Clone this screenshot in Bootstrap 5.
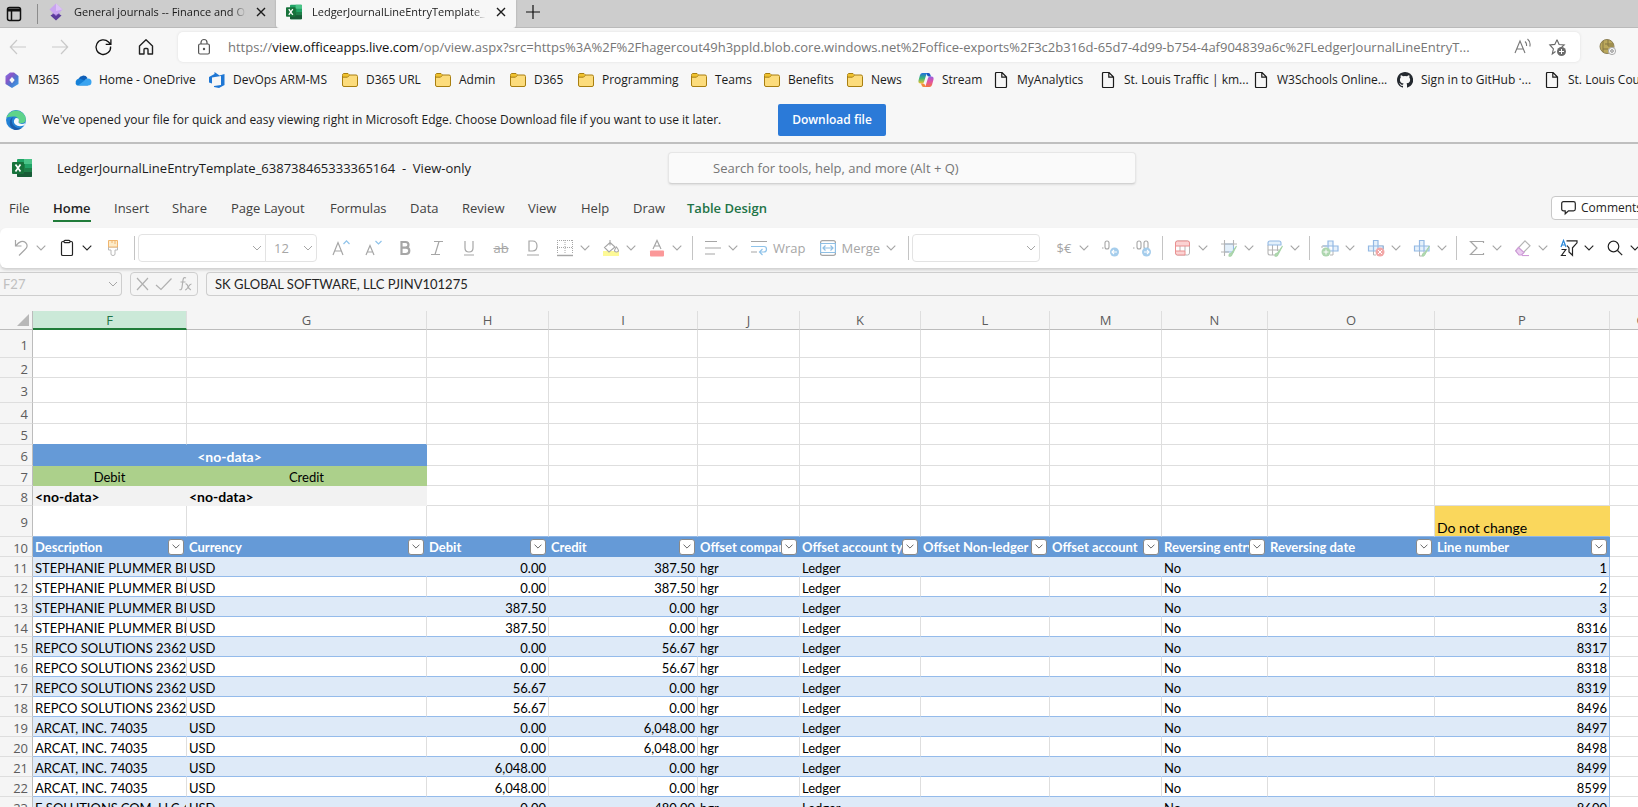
<!DOCTYPE html>
<html lang="en">
<head>
<meta charset="utf-8">
<meta name="viewport" content="width=device-width, initial-scale=1">
<title>LedgerJournalLineEntryTemplate</title>
<link href="https://cdn.jsdelivr.net/npm/bootstrap@5.3.0/dist/css/bootstrap.min.css" rel="stylesheet">
<style>
body{font-family:"Open Sans","Noto Sans",sans-serif;font-size:12px;line-height:16px;color:#1b1b1b;background:#f5f5f5}
svg{display:block;flex:none;overflow:visible}
button{font:inherit;color:inherit}
.plain{border:0;background:none;padding:0;display:flex;align-items:center;justify-content:center}
.i16{width:16px;height:16px}

/* browser chrome */
.tabstrip{height:28px;background:#cdcdcd;box-shadow:inset 0 -1px #bababa}
.tab-actions{width:38px;padding-left:6px;border-right:1px solid #8c8c8c;height:20px;justify-content:flex-start}
.page-tab{height:28px;padding:0 10px;gap:10px;color:#1b1b1b;text-decoration:none;font-size:11px}
.page-tab.first{width:238px}
.page-tab.current{width:240px;background:#f7f7f7;border-radius:0 0 3px 3px;box-shadow:0 0 2px #999;clip-path:inset(0 -2px)}
.tab-label{flex:1;min-width:0;overflow:hidden;white-space:nowrap;-webkit-mask-image:linear-gradient(90deg,#000 92%,transparent);mask-image:linear-gradient(90deg,#000 92%,transparent)}
.chrome{background:#f7f7f7}
.toolbar{height:38px;padding-right:22px;gap:20px}
.toolbar-main{min-width:0}
.nav-keys{width:178px;padding-left:9px;gap:27px}
.address{height:30px;border-radius:5px;box-shadow:0 0 3px #ddd;padding:0 14px 0 20px;min-width:0;gap:18px}
.url{font-size:13px;color:#767676;min-width:0;outline:0}
.url b{font-weight:400;color:#111}
.bookmarks{display:grid;height:28px;padding-left:4px;grid-template-columns:71px 134px 133px 93px 75px 68px 113px 73px 83px 71px 75px 107px 153px 144px 147px 150px}
.bookmarks a{display:flex;align-items:center;gap:8px;color:#1b1b1b;text-decoration:none;white-space:nowrap}
.notice{height:50px;padding:4px 0 0 6px;border-bottom:2px solid #bfbfbf;gap:16px;white-space:nowrap}
.notice-text{min-width:704px}
.btn-download{width:108px;height:32px;background:#2b7ad8;color:#fff;border-radius:2px;font-size:12px;font-weight:600;padding:0;margin-left:16px}
.btn-download:hover{background:#2369bd;color:#fff}

/* workbook header */
.titlebar{display:grid;grid-template-columns:668px 468px 1fr;height:48px;align-items:center;font-size:13px}
.book-name{padding-left:12px;gap:25px}
.search{height:32px;background:#fafafa;border:1px solid #e6e6e6;border-bottom-color:#d2d2d2;border-radius:4px;padding:0 44px;font-size:13px;box-shadow:0 1px 2px #ddd}
.search::placeholder{color:#767676;opacity:1}
.menus{height:36px;font-size:13px;color:#424242;display:grid;grid-template-columns:44px 61px 58px 59px 99px 80px 52px 66px 53px 52px 54px 1fr 87px;padding-left:9px;overflow:hidden}
.menus a{color:inherit;text-decoration:none;white-space:nowrap;justify-self:start;height:30px;padding-top:8px}
.menus .on{font-weight:600;color:#242424;border-bottom:2px solid #217c3a}
.menus .ctx{font-weight:600;color:#217346}
.comments{width:100px;height:24px;background:#fff;border:1px solid #c8c8c8;border-radius:4px;padding-left:9px;gap:5px;display:flex;align-items:center;font-size:12px;margin-top:4px;color:#242424}

/* ribbon */
.ribbon{display:grid;grid-template-columns:134px 558px 216px 254px 147px 147px 182px;height:40px;background:#fff;border-radius:6px 0 0 6px;box-shadow:0 2px 3px #cfcfcf;color:#a6a6a6;overflow:hidden;font-size:13px;position:relative}
.rgroup{display:flex;align-items:center;min-width:0;padding-left:13px;position:relative}
.rgroup.tight{padding-left:4px}
.rgroup+.rgroup::before{content:"";position:absolute;left:0;top:8px;width:1px;height:24px;background:#c4c4c4}
.split{width:46px;gap:7px;justify-content:flex-start;flex:none}
.wide{gap:6px;margin-right:14px}
.one{width:32px;height:28px;flex:none}
.live{color:#242424}
.pick{appearance:none;height:28px;border:1px solid #e3e3e3;border-radius:4px;font-size:13px;color:#a6a6a6;padding:0 8px;background:#fff url("data:image/svg+xml,%3Csvg xmlns='http://www.w3.org/2000/svg' width='10' height='6'%3E%3Cpath d='M1 1l4 4 4-4' fill='none' stroke='%23a6a6a6'/%3E%3C/svg%3E") no-repeat right 3px center;flex:none}
.pick.face{width:128px;border-radius:4px 0 0 4px}
.pick.pt{width:52px;margin:0 8px 0 -1px;border-radius:0 4px 4px 0}
.pick.num{width:128px;margin-right:16px}

/* formula bar */
.fbar{display:grid;grid-template-columns:122px 68px 1fr;gap:8px;padding:4px 0 15px;overflow:hidden}
.fbox{height:24px;border:1px solid #cecece;border-radius:4px;background:#f5f5f5;font-family:Lato,sans-serif;font-size:13px;padding:0 8px;color:#242424;min-width:0}
.fbox.where{border-left:0;border-radius:0 4px 4px 0;color:#c0c0c0;padding-left:3px;background:#f5f5f5 url("data:image/svg+xml,%3Csvg xmlns='http://www.w3.org/2000/svg' width='10' height='6'%3E%3Cpath d='M1 1l4 4 4-4' fill='none' stroke='%23a6a6a6'/%3E%3C/svg%3E") no-repeat right 3px center}
.fbox.keys{padding:0 5px;color:#b0b0b0}
.fbox.whole{border-right:0;border-radius:4px 0 0 4px}

/* sheet: the last column runs past the window's right edge */
.sheet{table-layout:fixed;width:calc(100% + 36px);border-collapse:separate;border-spacing:0;font-family:Lato,sans-serif;font-size:13px;line-height:16px;color:#000;background:#fff}
.sheet th,.sheet td{padding:0 2px;border-right:1px solid #dedede;border-bottom:1px solid #dedede;overflow:hidden;white-space:nowrap;height:20px;vertical-align:bottom;font-weight:400}
.sheet thead th{height:19px;background:#f5f5f5;color:#5c5c5c;text-align:center;vertical-align:middle;border-bottom-color:#bcbcbc;font-family:"Open Sans",sans-serif;padding:0}
.sheet thead .sel{background:#cbe9d8;color:#217346;border-bottom:2px solid #217c3a}
.sheet tbody th{background:#f5f5f5;color:#5c5c5c;text-align:right;vertical-align:middle;padding:2px 4px 0 0;border-right-color:#bcbcbc;font-family:"Open Sans",sans-serif;font-size:13px}
.sheet .corner{border-right-color:#bcbcbc}
.corner svg{margin-left:17px}
.sheet .r1 *{height:28px}.sheet .r3 *{height:25px}.sheet .r4 *,.sheet .r5 *,.sheet .r6 *{height:21px}.sheet .r9 *{height:31px}
.sheet .blue{background:#659ad7;border-color:#659ad7;color:#fff;font-weight:700;text-align:center;font-size:14px}
.sheet .green{background:#acd08b;border-color:#acd08b;text-align:center}
.sheet .grey{background:#f2f2f2;border-color:#f2f2f2;font-weight:700;font-size:14px}
.sheet .gold{background:#fad75c;border-right-color:#fad75c;font-size:14px}
.sheet .r5 .edge{border-bottom-color:#659ad7}
.sheet .r9 td:not(:last-child){border-bottom-color:#8fb6e6}
.sheet .hd{background:#659ad7;border-color:#659ad7;color:#fff;font-weight:700;padding:0 2px}
.hd div{display:flex;align-items:center;height:19px}
.hd span{flex:1;min-width:0;overflow:hidden;padding-top:1px}
.filter{width:16px;height:16px;flex:none;background:#fff;border:1px solid #8a8a8a;border-radius:3px;color:#555}
.sheet .rec{border-bottom-color:#94bbeb}
.sheet .band .rec{background:#deeaf8;border-right-color:#deeaf8}
.sheet .rec:nth-last-child(2){border-right-color:#94bbeb}
.sheet .n{text-align:right}
</style>
</head>
<body class="vh-100 overflow-hidden d-flex flex-column">

<svg width="0" height="0" class="position-absolute" aria-hidden="true">
  <defs>
    <linearGradient id="gm" x1="0" y1="0" x2="1" y2="1"><stop offset="0" stop-color="#7b83eb"/><stop offset=".3" stop-color="#8a55c8"/><stop offset=".6" stop-color="#4a78d0"/><stop offset="1" stop-color="#45a9ec"/></linearGradient>
    <linearGradient id="gl" x1="0" y1="0" x2="0" y2="1"><stop offset="0" stop-color="#1f6fe0"/><stop offset=".5" stop-color="#38b778"/><stop offset="1" stop-color="#f2c230"/></linearGradient>
    <linearGradient id="gr" x1="0" y1="0" x2="0" y2="1"><stop offset="0" stop-color="#9a5be0"/><stop offset=".5" stop-color="#e254a0"/><stop offset="1" stop-color="#f5733f"/></linearGradient>
    <symbol id="chev" viewBox="0 0 10 6"><path d="M.7.7 5 5 9.300.7" fill="none" stroke="currentColor" stroke-width="1.1"/></symbol>
    <symbol id="x" viewBox="0 0 10 10"><path d="M1 1l8 8M9 1l-8 8" stroke="currentColor" stroke-width="1.4"/></symbol>
    <symbol id="folder" viewBox="0 0 16 16"><path d="M.5 3.500Q.5 1.500 2 1.500h4l1.500 1.500H14q1.500 0 1.500 1.500v8.500q0 1.500-1.500 1.500H2Q.5 14.500.5 13z" fill="#fcdc7c" stroke="#a97f10"/><path d="M1 5V3q0-1 1-1h3.800l1.400 1.300L5.500 5z" fill="#f0c22e"/><path d="M.5 5.200h5l2-2" fill="none" stroke="#a97f10"/></symbol>
    <symbol id="page" viewBox="0 0 16 16"><path d="M2.500 1.500q0-1 1-1h5.500l4.500 4.500v9.500q0 1-1 1h-9q-1 0-1-1zM8.800.8v4.400h4.500" fill="none" stroke="#1b1b1b" stroke-width="1.200"/></symbol>
    <symbol id="excel" viewBox="0 0 20 18"><rect x="5" width="15" height="18" rx="1" fill="#21a366"/><path d="M12 0h7q1 0 1 1v4h-8z" fill="#4bc488"/><path d="M5 5h8v5H5z" fill="#188545"/><path d="M5 10h15v7q0 1-1 1H6q-1 0-1-1z" fill="#185c37"/><path d="M12 9h8v4h-8z" fill="#1e8049"/><rect y="3" width="12" height="12" rx="1" fill="#17733b"/><path d="M3.500 5.500l5 7M8.500 5.500l-5 7" stroke="#fff" stroke-width="1.700"/></symbol>
  </defs>
</svg>

<header class="chrome">
  <div class="tabstrip d-flex align-items-start">
    <button class="plain tab-actions mt-1" aria-label="Tab actions menu"><svg class="i16" viewBox="0 0 16 16" fill="none" stroke="#111" stroke-width="1.500"><rect x="1.500" y="1.500" width="13" height="13" rx="2"/><path d="M1.500 4h13" stroke-width="3"/><path d="M5.500 5v9"/></svg></button>
    <a href="#" class="page-tab first d-flex align-items-center pb-1"><svg class="i16" viewBox="0 0 16 16"><path d="M8 8l5.500 3.500L8 16.500 2.500 11.500z" fill="#5b3a9c"/><path d="M8-.5l6.500 6L8 12 1.500 5.500z" fill="#c9a4f0"/><path d="M8-.5l6.500 6L8 7z" fill="#dcc0f7"/><path d="M3 8.500L8 12l5-3.500L8 11z" fill="#7e55bd"/></svg><span class="tab-label">General journals -- Finance and Operations</span><svg width="10" height="10"><use href="#x"/></svg></a>
    <a href="#" class="page-tab current d-flex align-items-center pb-1"><svg class="i16"><use href="#excel"/></svg><span class="tab-label">LedgerJournalLineEntryTemplate_638738465333365164</span><svg width="10" height="10"><use href="#x"/></svg></a>
    <button class="plain ms-2 mt-1" aria-label="New tab"><svg width="18" height="16" viewBox="0 0 18 16"><path d="M9 1v14M2 8h14" stroke="#111" stroke-width="1.200"/></svg></button>
  </div>

  <div class="toolbar d-flex align-items-center">
    <div class="toolbar-main d-flex align-items-center flex-grow-1">
      <nav class="nav-keys d-flex flex-shrink-0">
        <button class="plain" aria-label="Back"><svg class="i16" viewBox="0 0 16 16" fill="none" stroke="#c9c9c9" stroke-width="1.200"><path d="M17 8H1.500M8 1L1.300 8 8 15"/></svg></button>
        <button class="plain" aria-label="Forward"><svg class="i16" viewBox="0 0 16 16" fill="none" stroke="#c9c9c9" stroke-width="1.200"><path d="M0 8h15.500M9 1l6.700 7L9 15"/></svg></button>
        <button class="plain" aria-label="Refresh"><svg class="i16" viewBox="-1 0 16 16" fill="none" stroke="#111" stroke-width="1.300"><path d="M14.600 7.500A7.300 7.300 0 1 1 12.500 3L14.700 5.200M14.900.2v5.200H9.700"/></svg></button>
        <button class="plain" aria-label="Home"><svg class="i16" viewBox="0 0 16 16" fill="none" stroke="#222" stroke-width="1.400" stroke-linejoin="round"><path d="M1.500 7L8 .8 14.500 7v8H10v-4.500q0-1-1-1H7q-1 0-1 1V15H1.500z"/></svg></button>
      </nav>
      <div class="address bg-white d-flex align-items-center flex-grow-1">
        <svg width="12" height="16" viewBox="0 0 12 16" fill="none" stroke="#555" stroke-width="1.200"><rect x=".6" y="5" width="10.800" height="10" rx="1.500"/><path d="M3 5V3.500a3 3 0 0 1 6 0V5"/><circle cx="6" cy="10" r=".6" fill="#555"/></svg>
        <div class="url text-truncate flex-grow-1" role="textbox" aria-label="Address">https://<b>view.officeapps.live.com</b>/op/view.aspx?src=https%3A%2F%2Fhagercout49h3ppld.blob.core.windows.net%2Foffice-exports%2F3c2b316d-65d7-4d99-b754-4af904839a6c%2FLedgerJournalLineEntryT...</div>
        <button class="plain" aria-label="Read aloud"><svg class="i16" viewBox="0 0 16 16" fill="none" stroke="#777" stroke-width="1.100"><path d="M0 14L5 2l5 12M1.700 10h6.600M10 2.500q2 1.800 1.500 4.500M12.500 0q3.500 3 2.300 7.500"/></svg></button>
        <button class="plain" aria-label="Add to favorites"><svg width="17" height="17" viewBox="0 0 17 17"><path d="M8 .8l2.100 4.700 5.100.5-3.800 3.400M6.500 12.500L3.300 15l1.100-5.200L.8 6l5-.6L8 .8" fill="none" stroke="#666" stroke-width="1.100"/><circle cx="12.500" cy="12.500" r="4.500" fill="#6b6b6b"/><path d="M12.500 10v5M10 12.500h5" stroke="#fff"/></svg></button>
      </div>
    </div>
    <button class="plain" aria-label="Extension"><svg class="i16" viewBox="0 0 16 16"><circle cx="7" cy="7.500" r="7" fill="#bba85c" stroke="#8b7f55"/><path d="M3 2v11M8 1v6h5M5 5h8M8 10H3" stroke="#857742" fill="none"/><circle cx="12" cy="12" r="3.600" fill="#f7f7f7" stroke="#aaa"/><circle cx="12" cy="12" r="1.300" fill="none" stroke="#888"/></svg></button>
  </div>

  <nav class="bookmarks overflow-hidden" aria-label="Favorites bar">
    <a href="#"><svg class="i16" viewBox="0 0 16 16"><path d="M6 .5h4l4.500 3.500v8L8 16l-6.500-4V4zM8 5L5.300 8 8 11.200 10.700 8z" fill="url(#gm)" fill-rule="evenodd"/></svg>M365</a>
    <a href="#"><svg class="i16" viewBox="0 0 16 16"><path d="M3.500 7A5 5 0 0 1 12.500 6L9 10z" fill="#0f5fb8"/><path d="M4 6.500a4 4 0 0 0-2 7h11l-3-5z" fill="#1681d8"/><path d="M3 13.500h10a3.300 3.300 0 0 0 0-7Q10.500 6 9 9z" fill="#3aa4f0"/></svg>Home - OneDrive</a>
    <a href="#"><svg class="i16" viewBox="0 0 16 16"><path d="M0 5l5.500-3V0l5 3.500L15.500 2v11L10 16l-5-1v-1l7-1V4L3 5.500v6L0 10.500z" fill="#1f77d4"/></svg>DevOps ARM-MS</a>
    <a href="#"><svg class="i16"><use href="#folder"/></svg>D365 URL</a>
    <a href="#"><svg class="i16"><use href="#folder"/></svg>Admin</a>
    <a href="#"><svg class="i16"><use href="#folder"/></svg>D365</a>
    <a href="#"><svg class="i16"><use href="#folder"/></svg>Programming</a>
    <a href="#"><svg class="i16"><use href="#folder"/></svg>Teams</a>
    <a href="#"><svg class="i16"><use href="#folder"/></svg>Benefits</a>
    <a href="#"><svg class="i16"><use href="#folder"/></svg>News</a>
    <a href="#"><svg class="i16" viewBox="0 0 16 16"><path d="M4.500 1H10q-1.500.5-2 2.500L6 10q-.5 1.500-2 1.500H2.500Q0 11.500.5 8.500L2 3q.7-2 2.500-2z" fill="url(#gl)"/><path d="M11.500 15H6q1.500-.5 2-2.500L10 6q.5-1.500 2-1.500h1.500q2.500 0 2 3L14 13q-.7 2-2.500 2z" fill="url(#gr)"/><path d="M9 1h1.500q1.500 0 2 2l.4 1.500H11Q9.500 4.500 9 3z" fill="#1a57c4"/><path d="M7 15H5.500q-1.500 0-2-2L3 11.500h2Q6.500 11.500 7 13z" fill="#f58a3a"/></svg>Stream</a>
    <a href="#"><svg class="i16"><use href="#page"/></svg>MyAnalytics</a>
    <a href="#"><svg class="i16"><use href="#page"/></svg>St. Louis Traffic | km...</a>
    <a href="#"><svg class="i16"><use href="#page"/></svg>W3Schools Online...</a>
    <a href="#"><svg class="i16" viewBox="0 0 16 16"><path fill="#24292f" d="M8 0C3.580 0 0 3.580 0 8c0 3.540 2.290 6.530 5.470 7.590.4.070.55-.17.55-.38v-1.340c-2.230.48-2.700-1.070-2.700-1.070-.36-.92-.89-1.170-.89-1.170-.73-.5.050-.49.050-.49.810.06 1.230.83 1.230.83.720 1.230 1.880.87 2.340.67.070-.52.280-.88.510-1.080-1.780-.2-3.640-.89-3.640-3.950 0-.87.310-1.590.82-2.150-.08-.2-.36-1.020.08-2.120 0 0 .67-.22 2.200.82a7.600 7.600 0 0 1 4 0c1.530-1.040 2.200-.82 2.200-.82.440 1.100.16 1.920.08 2.120.51.560.82 1.270.82 2.150 0 3.070-1.870 3.750-3.650 3.950.29.250.54.730.54 1.480v2.200c0 .21.150.46.550.38A8 8 0 0 0 8 0z"/></svg>Sign in to GitHub ·...</a>
    <a href="#"><svg class="i16"><use href="#page"/></svg>St. Louis County</a>
  </nav>

  <div class="notice d-flex align-items-center">
    <svg width="20" height="20" viewBox="0 0 20 20"><circle cx="10" cy="10" r="10" fill="#2382d6"/><path d="M.3 8A10 10 0 0 1 19.900 9c0 3-2 4.300-4.500 4.300-2 0-3-.8-2.800-1.800.6-3-1.600-5-4.800-5C4 6.300 1 7.500.3 8z" fill="#5ed38a"/><path d="M8 6.800Q4.500 9 6.500 14q3 5 9.500 4a10 10 0 0 1-8 1.700Q2.500 16 4 10.500 5 7.500 8 6.800z" fill="#1b5cab"/><path d="M9.500 8.300Q6.500 11 9 14.300q3.500 3 8.800 1.200l.8-.5.800-2q-3 1.700-5.700.6-1.600-.8-1-2.400.7-1.500-.5-2.600-1.300-1-2.900-.3z" fill="#f4f9fc"/></svg>
    <span class="notice-text">We've opened your file for quick and easy viewing right in Microsoft Edge. Choose Download file if you want to use it later.</span>
    <button class="btn btn-download">Download file</button>
  </div>
</header>

<main class="flex-grow-1 overflow-hidden">
  <div class="titlebar">
    <div class="book-name d-flex align-items-center"><svg width="20" height="18"><use href="#excel"/></svg><span>LedgerJournalLineEntryTemplate_638738465333365164&nbsp; -&nbsp; View-only</span></div>
    <input class="search" type="search" aria-label="Search" placeholder="Search for tools, help, and more (Alt + Q)">
  </div>

  <nav class="menus">
    <a href="#">File</a><a href="#" class="on">Home</a><a href="#">Insert</a><a href="#">Share</a><a href="#">Page Layout</a><a href="#">Formulas</a><a href="#">Data</a><a href="#">Review</a><a href="#">View</a><a href="#">Help</a><a href="#">Draw</a><a href="#" class="ctx">Table Design</a>
    <button class="comments"><svg width="15" height="14" viewBox="0 0 15 14" fill="none" stroke="#242424" stroke-width="1.200"><path d="M2.500.7h10q1.800 0 1.800 1.800v5.500q0 1.800-1.800 1.800H7.500L4.200 12.800V9.800H2.500Q.7 9.800.7 8V2.500Q.7.700 2.500.7z"/></svg>Comments</button>
  </nav>

  <div class="ribbon" role="toolbar" aria-label="Home">
    <div class="rgroup">
      <button class="plain split" aria-label="Undo"><svg class="i16" viewBox="0 0 16 16" fill="none" stroke="currentColor" stroke-width="1.200"><path d="M2.500 0v6h6M2.800 5.800Q8-1 12.500 2.500 16 6 12 9.500L6 15.500"/></svg><svg width="10" height="6"><use href="#chev"/></svg></button>
      <button class="plain split live" aria-label="Paste"><svg class="i16" viewBox="0 0 16 16" fill="none" stroke="currentColor" stroke-width="1.200"><rect x="2.500" y="1.500" width="11" height="14" rx="1.300"/><rect x="5" y=".3" width="6" height="2.400" rx="1" fill="#fff"/></svg><svg width="10" height="6"><use href="#chev"/></svg></button>
      <button class="plain i16" aria-label="Format painter"><svg class="i16" viewBox="0 0 16 16" fill="none" stroke="#b8b8b8"><path d="M3.500 7h9v3H10v4q0 1.500-2 1.500T6 14v-4H3.500z"/><path d="M3.500.500h9V7h-9zM7 .5V3M10 .5V4" fill="#fdebc8" stroke="#f0b56e"/></svg></button>
    </div>
    <div class="rgroup tight">
      <select class="pick face" aria-label="Font"><option></option></select><select class="pick pt" aria-label="Font size"><option>12</option></select>
      <button class="plain one" aria-label="Grow font"><svg class="i16" viewBox="0 0 16 16" fill="none" stroke="currentColor" stroke-width="1.200"><path d="M0 15L5 2.500 10 15M1.700 11h6.600"/><path d="M10.500 4L13.500.8l3 3.200" stroke="#8fc3ea"/></svg></button>
      <button class="plain one" aria-label="Shrink font"><svg class="i16" viewBox="0 0 16 16" fill="none" stroke="currentColor" stroke-width="1.200"><path d="M1 15l4-9.500L9 15M2.400 12h5.200"/><path d="M10.500 1L13.500 4l3-3" stroke="#8fc3ea"/></svg></button>
      <button class="plain one" aria-label="Bold"><svg class="i16" viewBox="0 0 16 16" fill="none" stroke="currentColor" stroke-width="2.200"><path d="M4.500 2h4q3 0 3 2.800t-3 2.800h-4zM4.500 7.600H9q3.300 0 3.300 3.100T9 14H4.500z"/></svg></button>
      <button class="plain one" aria-label="Italic"><svg class="i16" viewBox="0 0 16 16" fill="none" stroke="currentColor" stroke-width="1.200"><path d="M5 1.500h9M2 14.500h9M10 1.500l-4 13"/></svg></button>
      <button class="plain one" aria-label="Underline"><svg class="i16" viewBox="0 0 16 16" fill="none" stroke="currentColor" stroke-width="1.200"><path d="M4 1v7q0 4 4 4t4-4V1M3 15h10"/></svg></button>
      <button class="plain one text-decoration-line-through" aria-label="Strikethrough">ab</button>
      <button class="plain one" aria-label="Double underline"><svg class="i16" viewBox="0 0 16 16" fill="none" stroke="currentColor" stroke-width="1.200"><path d="M4 1h3.500q4.500 0 4.500 5t-4.500 5H4zM2 15h12"/></svg></button>
      <button class="plain split ms-2" aria-label="Borders"><svg class="i16" viewBox="0 0 16 16" fill="none" stroke="currentColor"><path d="M.5 0v14M15.500 0v14M8 0v14M0 .5h16M0 7.500h16" stroke-dasharray="1 1"/><path d="M0 15.500h16" stroke-width="1.400"/></svg><svg width="10" height="6"><use href="#chev"/></svg></button>
      <button class="plain split" aria-label="Fill color"><svg class="i16" viewBox="0 0 16 16" fill="none" stroke="currentColor" stroke-width="1.100"><path d="M0 11h16v5H0z" fill="#fdf996" stroke="none"/><path d="M7 2.500L12 7 6 12 1.500 7.500zM7 0v5.500M13.500 7q4 5 0 5t0-5z" fill="#fff"/></svg><svg width="10" height="6"><use href="#chev"/></svg></button>
      <button class="plain split" aria-label="Font color"><svg class="i16" viewBox="0 0 16 16" fill="none" stroke="currentColor" stroke-width="1.200"><path d="M4 9l4-8.500L12 9M5.500 6h5"/><rect x="1" y="10.500" width="14" height="6" rx="1" fill="#fb9899" stroke="none"/></svg><svg width="10" height="6"><use href="#chev"/></svg></button>
    </div>
    <div class="rgroup">
      <button class="plain split" aria-label="Align"><svg class="i16" viewBox="0 0 16 16" stroke="currentColor" stroke-width="1.200"><path d="M0 1.500h12M0 8h16M0 14h10"/></svg><svg width="10" height="6"><use href="#chev"/></svg></button>
      <button class="plain wide"><svg class="i16" viewBox="0 0 16 16" fill="none" stroke="currentColor" stroke-width="1.200"><path d="M0 1.500h16M0 12h6"/><path d="M0 6.500h13q2.500 0 2.500 2.700T13 12H9M11.500 9L8.500 12l3 3" stroke="#8fc3ea"/></svg>Wrap</button>
      <button class="plain wide"><svg class="i16" viewBox="0 0 16 16" fill="none" stroke="currentColor" stroke-width="1.200"><path d="M.6 3.500V2.600Q.6.600 2.600.6h10.800q2 0 2 2v.9M.6 12.500v.9q0 2 2 2h10.800q2 0 2-2v-.9"/><path d="M.6 3.500h14.800v9H.6zM3 8h10M5.500 5.500L3 8l2.500 2.500M10.500 5.500L13 8l-2.500 2.500" stroke="#8fbfe4"/></svg><span>Merge</span><svg width="10" height="6"><use href="#chev"/></svg></button>
    </div>
    <div class="rgroup tight">
      <select class="pick num" aria-label="Number format"><option></option></select>
      <button class="plain split" aria-label="Currency"><span class="d-flex justify-content-center i16">$€</span><svg width="10" height="6"><use href="#chev"/></svg></button>
      <button class="plain i16 me-3" aria-label="Increase decimal"><svg class="i16" viewBox="0 0 16 16" fill="none" stroke="currentColor" stroke-width="1.100"><path d="M0 8h1.500"/><rect x="3" y="1" width="4" height="8" rx="2"/><circle cx="12.500" cy="12" r="4.500" fill="#a5cdec" stroke="none"/><path d="M15 12h-5M12 10l-2 2 2 2" stroke="#fff"/></svg></button>
      <button class="plain i16" aria-label="Decrease decimal"><svg class="i16" viewBox="0 0 16 16" fill="none" stroke="currentColor" stroke-width="1.100"><path d="M-1 8h1.500"/><rect x="3" y="1" width="4" height="8" rx="2"/><rect x="10" y="1" width="4" height="8" rx="2"/><circle cx="12.500" cy="12" r="4.500" fill="#a5cdec" stroke="none"/><path d="M10 12h5M13 10l2 2-2 2" stroke="#fff"/></svg></button>
    </div>
    <div class="rgroup">
      <button class="plain split" aria-label="Conditional formatting"><svg class="i16" viewBox="0 0 16 16" fill="none" stroke="#b5b5b5"><rect x=".5" y="1" width="14" height="14" rx="2"/><path d="M5 6v5M10 6v5"/><path d="M10 1H2.500Q.5 1 .5 3v3H14.500V3q0-2-2-2zM.5 11v2q0 2 2 2H10v-4zM.5 6v5" fill="#fbd3d3" stroke="#ea9090"/></svg><svg width="10" height="6"><use href="#chev"/></svg></button>
      <button class="plain split" aria-label="Format cells"><svg class="i16" viewBox="0 0 16 16" fill="none" stroke="#b5b5b5" stroke-width="1.100"><path d="M3.500 4h9v8h-9z" fill="#e3f0fb" stroke="#94b9e4"/><path d="M3.500 0v16M12.500 0v6M0 4h16M0 12h8"/><path d="M8 16q0-3 2.500-3l5-7-4.500 8.500Q10 17 8 16z" fill="#b1d8b1" stroke="#a8d4a8"/></svg><svg width="10" height="6"><use href="#chev"/></svg></button>
      <button class="plain split" aria-label="Format as table"><svg class="i16" viewBox="0 0 16 16" fill="none" stroke="#b5b5b5" stroke-width="1.100"><path d="M1 5v8q0 2 2 2h5M5.500 5v10M10.500 5v6M1 10h11"/><path d="M1 5V3q0-2 2-2h9q2 0 2 2v2z" fill="#e3f0fb" stroke="#94b9e4"/><path d="M8 16q0-3 2.500-3l5-7-4.500 8.500Q10 17 8 16z" fill="#b1d8b1" stroke="#a8d4a8"/></svg><svg width="10" height="6"><use href="#chev"/></svg></button>
    </div>
    <div class="rgroup">
      <button class="plain split" aria-label="Insert cells"><svg class="i16" viewBox="0 0 16 16" fill="none"><path d="M0 8V6h5M11 11v4H8" stroke="#b5b5b5"/><path d="M6 1h5v5h5v5h-5v-5H6zM6 6v5h5M1 6h5" fill="#e6f1fb" stroke="#94b9e4" stroke-width="1.200"/><circle cx="4" cy="12" r="4.500" fill="#add6ae"/><path d="M4 9.500v5M1.500 12h5" stroke="#fff"/></svg><svg width="10" height="6"><use href="#chev"/></svg></button>
      <button class="plain split" aria-label="Delete cells"><svg class="i16" viewBox="0 0 16 16" fill="none"><path d="M5.500 11v4H8M11 6h4.500v3" stroke="#b5b5b5"/><path d="M5.500.5H10V6h5v5H.5V6h5zM5.500 6v5M10 6v5M5.500 6H10" fill="#e6f1fb" stroke="#94b9e4" stroke-width="1.200"/><circle cx="12" cy="12" r="4.500" fill="#f2a7a7"/><path d="M10 10l4 4M14 10l-4 4" stroke="#fff"/></svg><svg width="10" height="6"><use href="#chev"/></svg></button>
      <button class="plain split" aria-label="Format rows"><svg class="i16" viewBox="0 0 16 16" fill="none"><path d="M5.500 11v5H8M10 11v2" stroke="#b5b5b5"/><path d="M5.500.5H10V6h5v5H.5V6h5zM5.500 6v5M10 6v5M5.500 6H10" fill="#e6f1fb" stroke="#94b9e4" stroke-width="1.200"/><path d="M8 16q0-3 2.500-3l5-7-4.500 8.500Q10 17 8 16z" fill="#b1d8b1" stroke="#a8d4a8"/></svg><svg width="10" height="6"><use href="#chev"/></svg></button>
    </div>
    <div class="rgroup">
      <button class="plain split" aria-label="AutoSum"><svg class="i16" viewBox="0 0 16 16" fill="none" stroke="currentColor" stroke-width="1.200"><path d="M14.500 3V1.500h-13L8 8l-6.500 6.500h13V13"/></svg><svg width="10" height="6"><use href="#chev"/></svg></button>
      <button class="plain split" aria-label="Clear"><svg class="i16" viewBox="0 0 16 16" fill="none" stroke="#b5b5b5" stroke-width="1.200"><path d="M10 .8l5 5L6.500 14.500H4L.8 10.500z"/><path d="M3.500 7.500l5.500 5-2.500 2.500H4L.8 11z" fill="#ebcdf0" stroke="#cf9ad8"/><path d="M7 15.500h7" stroke="#cf9ad8"/></svg><svg width="10" height="6"><use href="#chev"/></svg></button>
      <button class="plain split live" aria-label="Sort and filter"><svg class="i16" viewBox="0 0 16 16" fill="none" stroke="#242424" stroke-width="1.200"><path d="M0 7L2.500.5 5 7M1 5h3" stroke="#2b88d8"/><path d="M.5 9.500h4.300L.5 15.500H5M5.500.8H16v2l-4.500 5v7.500L8 12V8L6 5.500"/></svg><svg width="10" height="6"><use href="#chev"/></svg></button>
      <button class="plain split live" aria-label="Find"><svg class="i16" viewBox="0 0 16 16" fill="none" stroke="#242424" stroke-width="1.200"><circle cx="6.500" cy="6.500" r="5.300"/><path d="M10.500 10.500l4.700 4.700"/></svg><svg width="10" height="6"><use href="#chev"/></svg></button>
    </div>
  </div>

  <div class="fbar">
    <input class="fbox where" value="F27" aria-label="Name box">
    <div class="fbox keys d-flex align-items-center justify-content-between">
      <button class="plain" aria-label="Cancel"><svg width="13" height="12" viewBox="0 0 13 12" stroke="currentColor" stroke-width="1.200"><path d="M1 0l11 12M12 0L1 12"/></svg></button>
      <button class="plain" aria-label="Enter"><svg width="16" height="12" viewBox="0 0 16 12" fill="none" stroke="currentColor" stroke-width="1.200"><path d="M0 7l5 4.500L15.500.5"/></svg></button>
      <button class="plain" aria-label="Insert function"><svg width="13" height="14" viewBox="0 0 13 14" fill="none" stroke="currentColor" stroke-width="1.200"><path d="M7 1Q4.500-.5 4 3L3 10.500Q2.500 13.500.5 12.500M1.500 5h5M6.500 7q1.500-.5 2.500 2.500t3 3.500M12.500 7Q11 7 9.200 10T6 13"/></svg></button>
    </div>
    <input class="fbox whole" value="SK GLOBAL SOFTWARE, LLC PJINV101275" aria-label="Formula bar">
  </div>

  <table class="sheet" aria-label="Worksheet">
    <colgroup><col width="33"><col width="154"><col width="240"><col width="122"><col width="149"><col width="102"><col width="121"><col width="129"><col width="112"><col width="106"><col width="167"><col width="175"><col></colgroup>
    <thead><tr><th class="corner"><svg width="12" height="12"><path d="M12 0v12H0z" fill="#b8b8b8"/></svg></th><th class="sel">F</th><th>G</th><th>H</th><th>I</th><th>J</th><th>K</th><th>L</th><th>M</th><th>N</th><th>O</th><th>P</th><th>Q</th></tr></thead>
    <tbody id="rows"></tbody>
  </table>
</main>

<script src="https://cdn.jsdelivr.net/npm/bootstrap@5.3.0/dist/js/bootstrap.bundle.min.js"></script>
<script>
const blank = n => '<td></td>'.repeat(n);
const out = [];
const row = (n, cells, cls = '') => out.push(`<tr class="r${n} ${cls}"><th scope="row">${n}</th>${cells}</tr>`);

for (let n = 1; n <= 4; n++) row(n, blank(12));
row(5, '<td class="edge"></td><td class="edge"></td>' + blank(10));
row(6, '<td class="blue" colspan="2">&lt;no-data&gt;</td>' + blank(10));
row(7, '<td class="green">Debit</td><td class="green">Credit</td>' + blank(10));
row(8, '<td class="grey">&lt;no-data&gt;</td><td class="grey">&lt;no-data&gt;</td>' + blank(10));
row(9, blank(10) + '<td class="gold">Do not change</td><td></td>');

const heads = ['Description', 'Currency', 'Debit', 'Credit', 'Offset company', 'Offset account type', 'Offset Non-ledger account', 'Offset account', 'Reversing entry', 'Reversing date', 'Line number'];
row(10, heads.map(h => `<td class="hd"><div><span>${h}</span><button class="plain filter" aria-label="Filter ${h}"><svg width="8" height="5"><use href="#chev"/></svg></button></div></td>`).join('') + '<td></td>');

const S = 'STEPHANIE PLUMMER BROWN', R = 'REPCO SOLUTIONS 23624', A = 'ARCAT, INC. 74035';
const data = [
  [S, '0.00', '387.50', 1], [S, '0.00', '387.50', 2], [S, '387.50', '0.00', 3], [S, '387.50', '0.00', 8316],
  [R, '0.00', '56.67', 8317], [R, '0.00', '56.67', 8318], [R, '56.67', '0.00', 8319], [R, '56.67', '0.00', 8496],
  [A, '0.00', '6,048.00', 8497], [A, '0.00', '6,048.00', 8498], [A, '6,048.00', '0.00', 8499], [A, '6,048.00', '0.00', 8599],
  ['E SOLUTIONS.COM, LLC 4', '0.00', '480.00', 8600]
];
data.forEach(([name, debit, credit, line], i) => {
  const cells = [[name], ['USD'], [debit, 'n'], [credit, 'n'], ['hgr'], ['Ledger'], [''], [''], ['No'], [''], [line, 'n']];
  row(11 + i, cells.map(([t, c = '']) => `<td class="rec ${c}">${t}</td>`).join('') + '<td></td>', i % 2 ? '' : 'band');
});
document.getElementById('rows').innerHTML = out.join('');
</script>
</body>
</html>
